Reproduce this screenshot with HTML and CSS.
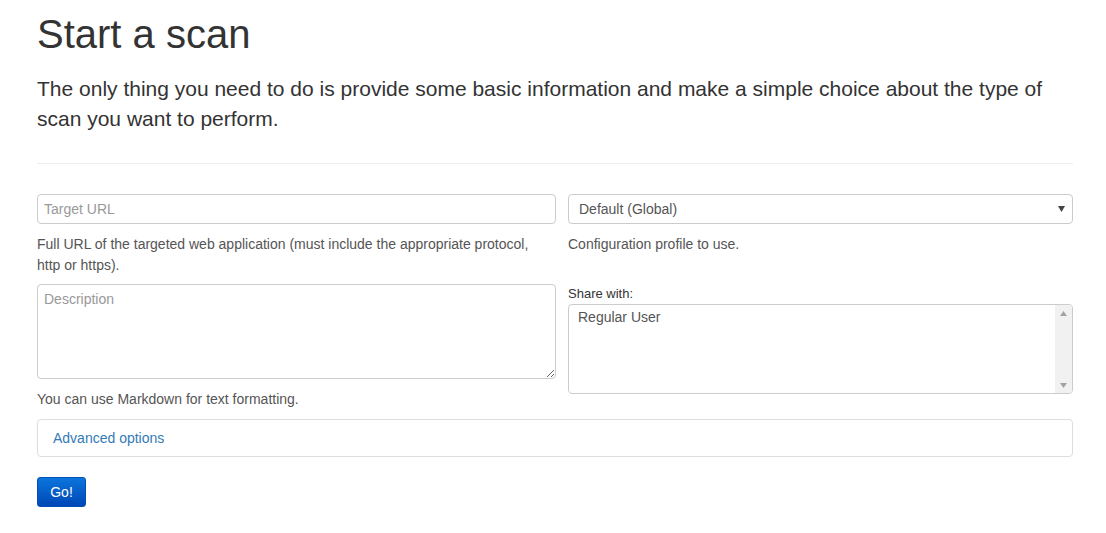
FILE: index.html
```html
<!DOCTYPE html>
<html>
<head>
<meta charset="utf-8">
<link rel="stylesheet" href="styles.css">
</head>
<body>
<div class="page">
  <h1 class="title">Start a scan</h1>
  <p class="lead">The only thing you need to do is provide some basic information and make a simple choice about the type of scan you want to perform.</p>
  <hr class="rule">
  <form class="scan-form">
    <div class="grid">
      <div class="cell">
        <input class="field" type="text" placeholder="Target URL">
        <p class="help">Full URL of the targeted web application (must include the appropriate protocol, http or https).</p>
      </div>
      <div class="cell">
        <div class="select-wrap">
          <select class="field select"><option>Default (Global)</option></select>
          <svg class="caret" width="7" height="6" viewBox="0 0 7 6"><path d="M0 0H7L3.5 6Z" fill="#444"/></svg>
        </div>
        <p class="help">Configuration profile to use.</p>
      </div>
      <div class="cell">
        <textarea class="field area" placeholder="Description"></textarea>
        <p class="help help-last">You can use Markdown for text formatting.</p>
      </div>
      <div class="cell share">
        <label class="label">Share with:</label>
        <div class="multi">
          <div class="options"><div class="option">Regular User</div></div>
          <div class="scrollbar">
            <svg width="7" height="5" viewBox="0 0 7 5"><path d="M0 5H7L3.5 0Z" fill="#a3a3a3"/></svg>
            <svg width="7" height="5" viewBox="0 0 7 5"><path d="M0 0H7L3.5 5Z" fill="#a3a3a3"/></svg>
          </div>
        </div>
      </div>
    </div>
    <div class="panel"><a class="panel-link" href="#">Advanced options</a></div>
    <button class="go" type="button">Go!</button>
  </form>
</div>
</body>
</html>
```
FILE: styles.css
```css
html, body {
  margin: 0;
  padding: 0;
  background: #fff;
}
body {
  font-family: "Liberation Sans", Arial, sans-serif;
  color: #333;
  font-size: 14px;
  line-height: 1.42857;
}
.page {
  width: 1036px;
  padding: 10px 0 0 37px;
}
.title {
  margin: 0;
  font-size: 40px;
  font-weight: 400;
  line-height: 48px;
  color: #333;
}
.lead {
  margin: 16px 0 0;
  font-size: 21px;
  line-height: 30px;
  font-weight: 300;
}
.rule {
  margin: 29px 0 30px;
  border: 0;
  border-top: 1px solid #eee;
}
.grid {
  display: grid;
  grid-template-columns: 519px 505px;
  column-gap: 12px;
  row-gap: 0;
}
.cell {
  display: flex;
  flex-direction: column;
}
.field {
  box-sizing: border-box;
  display: block;
  width: 100%;
  height: 30px;
  padding: 5px 6px;
  font-family: "Liberation Sans", Arial, sans-serif;
  font-size: 14px;
  color: #555;
  background: #fff;
  border: 1px solid #ccc;
  border-radius: 4px;
  outline: none;
  margin: 0;
}
.field::placeholder {
  color: #999;
}
.select-wrap {
  position: relative;
}
.select {
  appearance: none;
  -webkit-appearance: none;
  padding: 5px 10px;
  color: #555;
}
.caret {
  position: absolute;
  right: 8px;
  top: 12px;
}
.help {
  margin: 10px 0 8px;
  padding-right: 20px;
  font-size: 14px;
  line-height: 21px;
  color: #555;
}
.help-last {
  margin-bottom: 9px;
}
.area {
  height: 95px;
  resize: vertical;
  padding: 6px 6px;
}
.label {
  font-size: 13px;
  line-height: 20px;
  color: #333;
}
.multi {
  box-sizing: border-box;
  height: 90px;
  border: 1px solid #ccc;
  border-radius: 4px;
  display: flex;
  overflow: hidden;
}
.options {
  flex: 1;
  padding: 3px 9px;
}
.option {
  font-size: 14px;
  line-height: 18px;
  color: #555;
}
.scrollbar {
  width: 17px;
  background: #f1f1f1;
  display: flex;
  flex-direction: column;
  justify-content: space-between;
  align-items: center;
  padding: 6px 0 5px;
}
.panel {
  margin-top: 0;
  box-sizing: border-box;
  height: 38px;
  border: 1px solid #ddd;
  border-radius: 4px;
  padding: 1px 15px 0;
  display: flex;
  align-items: center;
}
.panel-link {
  color: #337ab7;
  text-decoration: none;
  font-size: 14px;
}
.go {
  margin-top: 20px;
  box-sizing: border-box;
  width: 49px;
  height: 30px;
  border: 1px solid #0050b8;
  border-radius: 3px;
  background: linear-gradient(#0b75dc, #0047b6);
  color: #fff;
  font-family: "Liberation Sans", Arial, sans-serif;
  font-size: 14px;
  padding: 0;
}
```
